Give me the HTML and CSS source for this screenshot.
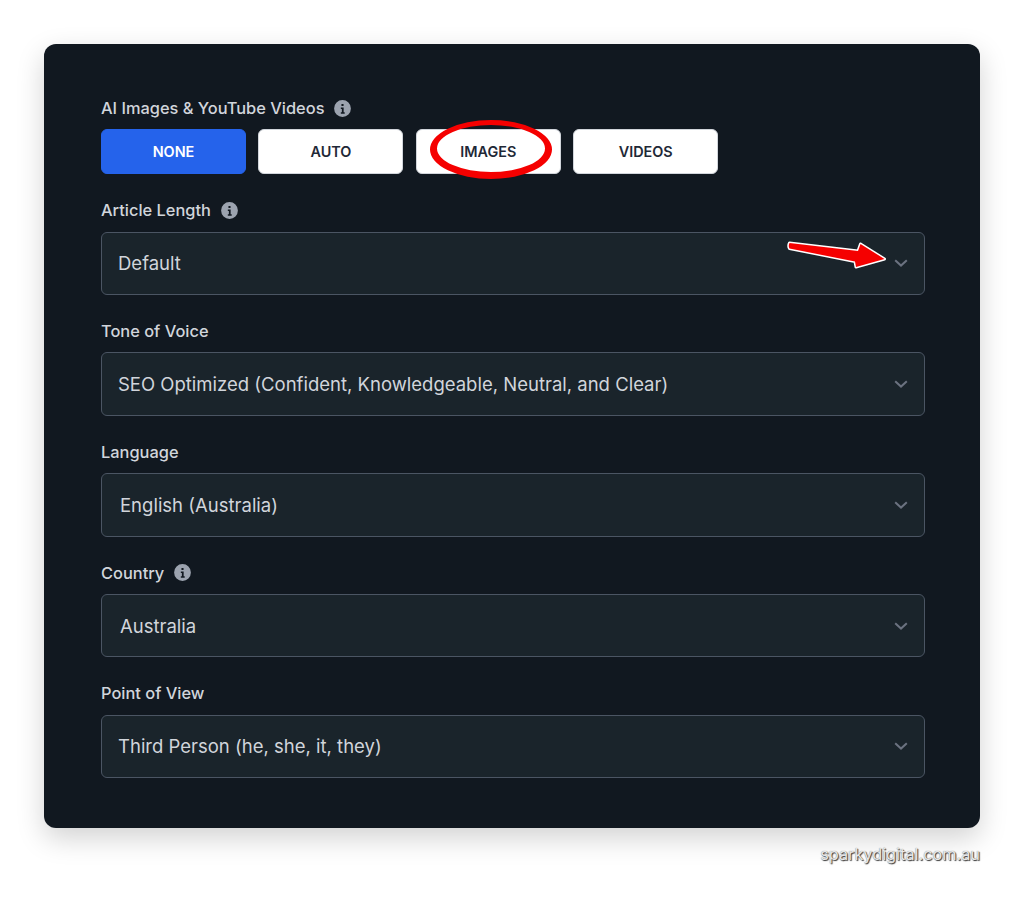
FILE: index.html
```html
<!DOCTYPE html>
<html lang="en">
<head>
    <meta charset="UTF-8"/>
    <title>Article Settings</title>
    <link rel="stylesheet" href="styles.css">
</head>
<body>
<div class="page">
    <div class="panel">
        <div class="field field-media">
            <div class="field-label">AI Images &amp; YouTube Videos
                <svg class="info-icon" viewBox="0 0 20 20"><path fill-rule="evenodd" d="M10 2a8 8 0 1 1 0 16 8 8 0 0 1 0-16zm-1 3.6h2v2.1H9zM8.4 9h2.7v4.6h1V15H8.4v-1.4h1v-3.2h-1z"/></svg>
            </div>
            <div class="button-row">
                <button class="choice choice-active">NONE</button>
                <button class="choice">AUTO</button>
                <button class="choice">IMAGES</button>
                <button class="choice">VIDEOS</button>
            </div>
        </div>

        <div class="field">
            <div class="field-label">Article Length
                <svg class="info-icon" viewBox="0 0 20 20"><path fill-rule="evenodd" d="M10 2a8 8 0 1 1 0 16 8 8 0 0 1 0-16zm-1 3.6h2v2.1H9zM8.4 9h2.7v4.6h1V15H8.4v-1.4h1v-3.2h-1z"/></svg>
            </div>
            <div class="select">
                <span>Default</span>
                <svg class="chevron" viewBox="0 0 14 8"><path d="M1.2 1.2 7 6.6l5.8-5.4"/></svg>
            </div>
        </div>

        <div class="field">
            <div class="field-label">Tone of Voice</div>
            <div class="select">
                <span>SEO Optimized (Confident, Knowledgeable, Neutral, and Clear)</span>
                <svg class="chevron" viewBox="0 0 14 8"><path d="M1.2 1.2 7 6.6l5.8-5.4"/></svg>
            </div>
        </div>

        <div class="field">
            <div class="field-label">Language</div>
            <div class="select select-search">
                <span>English (Australia)</span>
                <svg class="chevron" viewBox="0 0 14 8"><path d="M1.2 1.2 7 6.6l5.8-5.4"/></svg>
            </div>
        </div>

        <div class="field">
            <div class="field-label">Country
                <svg class="info-icon" viewBox="0 0 20 20"><path fill-rule="evenodd" d="M10 2a8 8 0 1 1 0 16 8 8 0 0 1 0-16zm-1 3.6h2v2.1H9zM8.4 9h2.7v4.6h1V15H8.4v-1.4h1v-3.2h-1z"/></svg>
            </div>
            <div class="select select-search">
                <span>Australia</span>
                <svg class="chevron" viewBox="0 0 14 8"><path d="M1.2 1.2 7 6.6l5.8-5.4"/></svg>
            </div>
        </div>

        <div class="field">
            <div class="field-label">Point of View</div>
            <div class="select">
                <span>Third Person (he, she, it, they)</span>
                <svg class="chevron" viewBox="0 0 14 8"><path d="M1.2 1.2 7 6.6l5.8-5.4"/></svg>
            </div>
        </div>
    </div>

    <div class="watermark">sparkydigital.com.au</div>

    <!-- red markup drawn over the screenshot -->
    <svg class="markup" viewBox="0 0 1024 907">
        <path class="markup-ring" fill-rule="evenodd" d="M430 149.5a61 29.5 0 1 0 122 0a61 29.5 0 1 0-122 0zM437 148.5a54 23.5 0 1 1 108 0a54 23.5 0 1 1-108 0z"/>
        <path class="markup-arrow" d="M789.5 243 L858 251 L860.5 244 L884.5 259 L856 267 L855 261.5 L789.5 248.5 Q788 246 789.5 243 Z"/>
    </svg>
</div>
</body>
</html>
```

FILE: styles.css
```css
body {
    margin: 0;
    background: #ffffff;
    font-family: "Inter", "Liberation Sans", sans-serif;
}

.page {
    position: relative;
    width: 1024px;
    height: 907px;
    padding: 44px 44px 0;
    box-sizing: border-box;
    overflow: hidden;
}

.panel {
    display: flex;
    flex-direction: column;
    gap: 24px;
    height: 784px;
    padding: 52px 55px 0 57px;
    box-sizing: border-box;
    background: #111820;
    border-radius: 12px;
    box-shadow: 0 10px 28px rgba(0, 0, 0, 0.18);
}

.field {
    display: flex;
    flex-direction: column;
    gap: 9.25px;
}

.field-label {
    display: flex;
    align-items: center;
    gap: 8px;
    height: 24px;
    font-size: 16.4px;
    font-weight: 500;
    color: #d1d5db;
}

.info-icon {
    width: 21px;
    height: 21px;
    fill: #9ca3af;
}

.button-row {
    display: flex;
    gap: 12.4px;
}

.choice {
    width: 145px;
    height: 45px;
    padding: 0;
    font-family: inherit;
    font-size: 14.4px;
    font-weight: 600;
    color: #1f2937;
    background: #ffffff;
    border: 1px solid #d1d5db;
    border-radius: 6px;
}

.choice-active {
    color: #ffffff;
    background: #2563eb;
    border-color: #2563eb;
}

.select {
    display: flex;
    align-items: center;
    justify-content: space-between;
    height: 63.5px;
    padding: 0 16px;
    box-sizing: border-box;
    font-size: 18.5px;
    color: #d1d5db;
    background: #1a242b;
    border: 1px solid #4b5563;
    border-radius: 6px;
}

.select-search {
    padding-left: 18px;
}

.chevron {
    width: 14px;
    height: 8px;
    fill: none;
    stroke: #6b7280;
    stroke-width: 2;
}

.watermark {
    margin-top: 16px;
    text-align: right;
    font-size: 16.3px;
    line-height: 20px;
    color: #e8e8e8;
    text-shadow: 1px 1px 1px #333333, 0 0 1px #777777;
}

.markup {
    position: absolute;
    top: 0;
    left: 0;
    width: 1024px;
    height: 907px;
}

.markup-ring {
    fill: #f50000;
}

.markup-arrow {
    fill: #f50000;
    stroke: #ffffff;
    stroke-width: 3;
    stroke-linejoin: round;
    paint-order: stroke;
}
```
